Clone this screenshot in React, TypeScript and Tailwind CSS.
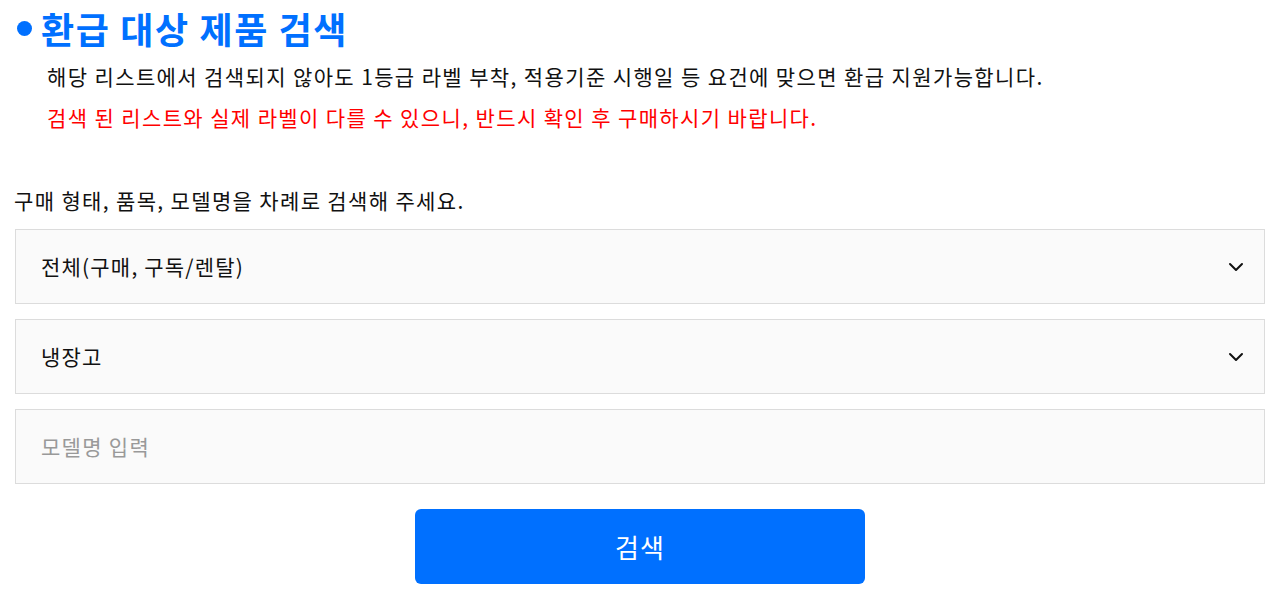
import React from "react";

const Chevron = () => (
  <svg width="16" height="10" viewBox="0 0 16 10" fill="none">
    <path d="M2 2l6 6 6-6" stroke="#111" strokeWidth="2" strokeLinecap="round" strokeLinejoin="round" />
  </svg>
);

const App = () => {
  return (
    <div
      className="w-[1285px] h-[614px] bg-white overflow-hidden"
      style={{ fontFamily: '"Noto Sans CJK KR", "Noto Sans", sans-serif' }}
    >
      {/* Title */}
      <div className="flex items-center pl-[17px] pt-[5px]">
        <span className="w-[15px] h-[15px] rounded-full bg-[#0070ff] mr-[9px]" />
        <h1 className="text-[36px] leading-[46px] font-bold text-[#0070ff] tracking-[1.6px]">
          환급 대상 제품 검색
        </h1>
      </div>

      {/* Notes */}
      <div className="pl-[47px] mt-[5px] text-[21px] leading-[41px] tracking-[1.38px]">
        <p className="text-[#111]">
          해당 리스트에서 검색되지 않아도 1등급 라벨 부착, 적용기준 시행일 등 요건에 맞으면 환급 지원가능합니다.
        </p>
        <p className="text-[#ff0000]">
          검색 된 리스트와 실제 라벨이 다를 수 있으니, 반드시 확인 후 구매하시기 바랍니다.
        </p>
      </div>

      {/* Form */}
      <div className="px-[15px] mt-[47px]">
        <p className="text-[21px] leading-[30px] tracking-[1.35px] text-[#111] -ml-[1px]">
          구매 형태, 품목, 모델명을 차례로 검색해 주세요.
        </p>

        <div className="flex flex-col gap-[15px] mt-[14px] w-[1250px]">
          <div className="h-[75px] border border-[#dcdcdc] bg-[#fafafa] flex items-center justify-between pl-[25px] pr-[20px]">
            <span className="text-[21px] tracking-[1.2px] text-[#111]">전체(구매, 구독/렌탈)</span>
            <Chevron />
          </div>
          <div className="h-[75px] border border-[#dcdcdc] bg-[#fafafa] flex items-center justify-between pl-[25px] pr-[20px]">
            <span className="text-[21px] tracking-[1.2px] text-[#111]">냉장고</span>
            <Chevron />
          </div>
          <div className="h-[75px] border border-[#dcdcdc] bg-[#fafafa] flex items-center pl-[25px] pr-[20px]">
            <input
              className="w-full bg-transparent text-[21px] tracking-[1.3px] text-[#111] placeholder:text-[#999] focus:outline-none"
              placeholder="모델명 입력"
            />
          </div>
        </div>

        <div className="flex justify-center mt-[25px] w-[1250px]">
          <button className="w-[450px] h-[75px] rounded-[6px] bg-[#0070ff] text-white text-[26px] tracking-[1px]">
            검색
          </button>
        </div>
      </div>
    </div>
  );
};

export default App;
